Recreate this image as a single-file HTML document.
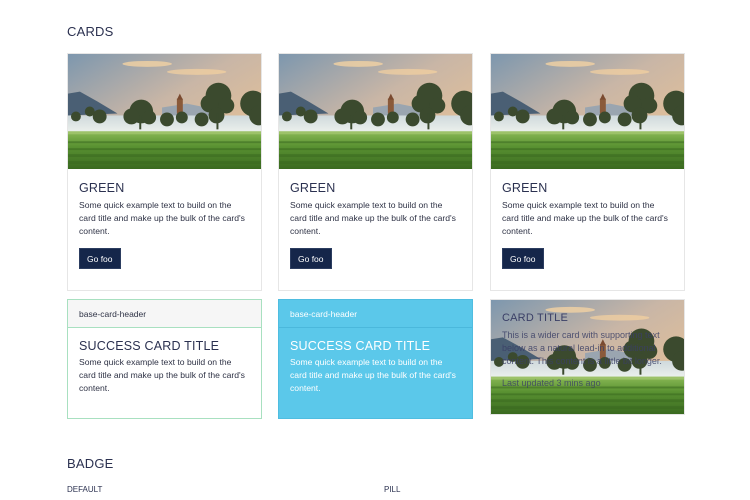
<!DOCTYPE html>
<html><head><meta charset="utf-8">
<style>
*{margin:0;padding:0;box-sizing:border-box}
body{width:750px;height:500px;background:#fff;font-family:"Liberation Sans",sans-serif;position:relative;overflow:hidden;color:#2b3150}
.h{position:absolute;font-size:13px;color:#2b3150;letter-spacing:.2px}
.card{position:absolute;border:1px solid #e6e6e6;background:#fff}
.card svg{display:block}
.body{padding:0 11px}
.t{font-size:12.5px;color:#2b3150;letter-spacing:.2px}
.p{font-size:8.6px;line-height:13px;color:#2f3346}
.btn{display:inline-block;background:#15264a;color:#fff;font-size:8.5px;height:21px;line-height:21px;padding:0 7px;border:1px solid #2c3d60}
.small{position:absolute;font-size:8px;color:#2b3150}
</style></head><body>
<svg width="0" height="0" style="position:absolute">
<defs>
<linearGradient id="sky" x1="0" y1="0" x2="1" y2="1">
<stop offset="0" stop-color="#7d97ae"/><stop offset=".45" stop-color="#c9b6a6"/><stop offset="1" stop-color="#efc592"/>
</linearGradient>
<linearGradient id="fld" x1="0" y1="0" x2="0" y2="1">
<stop offset="0" stop-color="#8ab955"/><stop offset=".4" stop-color="#5a9232"/><stop offset="1" stop-color="#3a6a20"/>
</linearGradient>
<linearGradient id="mist" x1="0" y1="0" x2="0" y2="1">
<stop offset="0" stop-color="#cfd9dc"/><stop offset="1" stop-color="#eef2ee"/>
</linearGradient>
<symbol id="land" viewBox="0 0 195 116" preserveAspectRatio="none">
<rect width="195" height="116" fill="url(#sky)"/>
<ellipse cx="80" cy="10" rx="25" ry="3" fill="#f3d2a2" opacity=".8"/>
<ellipse cx="130" cy="18" rx="30" ry="3" fill="#f5d29f" opacity=".7"/>
<path d="M0 40 L12 38 L30 48 L50 60 L0 62Z" fill="#4a5f74"/>
<path d="M95 54 L120 50 L150 56 L150 62 L95 62Z" fill="#9aa5b0"/>
<rect x="110" y="45" width="6" height="15" fill="#8a5a3a"/>
<path d="M113 40 L110 46 L116 46Z" fill="#7a4a30"/>
<rect x="0" y="62" width="195" height="18" fill="url(#mist)"/>
<g fill="#3b4a2e">
<circle cx="74" cy="58" r="12"/><circle cx="64" cy="63" r="8"/><circle cx="82" cy="64" r="7"/><rect x="72" y="62" width="2" height="14"/>
<circle cx="152" cy="42" r="13"/><circle cx="143" cy="50" r="9"/><circle cx="160" cy="52" r="8"/><circle cx="150" cy="62" r="8"/><rect x="150" y="60" width="2" height="16"/>
<circle cx="187" cy="50" r="13"/><circle cx="193" cy="62" r="10"/>
<circle cx="32" cy="63" r="7"/><circle cx="22" cy="58" r="5"/>
<circle cx="135" cy="66" r="7"/><circle cx="115" cy="64" r="6"/><circle cx="100" cy="66" r="7"/><circle cx="8" cy="63" r="5"/>
</g>
<rect x="0" y="78" width="195" height="38" fill="url(#fld)"/>
<g fill="#3a6a20" opacity=".55"><rect x="0" y="88" width="195" height="2"/><rect x="0" y="95" width="195" height="2"/><rect x="0" y="101" width="195" height="3"/><rect x="0" y="108" width="195" height="3"/></g>
<rect x="0" y="78" width="195" height="3" fill="#a6c874" opacity=".7"/>
</symbol>
</defs></svg>

<div class="h" style="left:67px;top:24px">CARDS</div>

<div class="card" style="left:67px;top:53px;width:195px;height:238px">
<svg width="193" height="115"><use href="#land" width="193" height="115"/></svg>
<div class="body"><div class="t" style="margin-top:12px">GREEN</div>
<div class="p" style="margin-top:4px">Some quick example text to build on the card title and make up the bulk of the card's content.</div>
<div class="btn" style="margin-top:10px">Go foo</div></div></div>

<div class="card" style="left:278px;top:53px;width:195px;height:238px">
<svg width="193" height="115"><use href="#land" width="193" height="115"/></svg>
<div class="body"><div class="t" style="margin-top:12px">GREEN</div>
<div class="p" style="margin-top:4px">Some quick example text to build on the card title and make up the bulk of the card's content.</div>
<div class="btn" style="margin-top:10px">Go foo</div></div></div>

<div class="card" style="left:490px;top:53px;width:195px;height:238px">
<svg width="193" height="115"><use href="#land" width="193" height="115"/></svg>
<div class="body"><div class="t" style="margin-top:12px">GREEN</div>
<div class="p" style="margin-top:4px">Some quick example text to build on the card title and make up the bulk of the card's content.</div>
<div class="btn" style="margin-top:10px">Go foo</div></div></div>

<div class="card" style="left:67px;top:299px;width:195px;height:120px;border-color:#a8e0c0">
<div style="height:28px;background:#f6f6f6;border-bottom:1px solid #a8e0c0;font-size:8.5px;line-height:28px;padding-left:11px;color:#2f3346">base-card-header</div>
<div class="body"><div class="t" style="margin-top:11px">SUCCESS CARD TITLE</div>
<div class="p" style="margin-top:3px">Some quick example text to build on the card title and make up the bulk of the card's content.</div></div></div>

<div class="card" style="left:278px;top:299px;width:195px;height:120px;background:#5bc8ea;border-color:#4fbde0">
<div style="height:28px;border-bottom:1px solid #4bb8dc;font-size:8.5px;line-height:28px;padding-left:11px;color:#fff">base-card-header</div>
<div class="body"><div class="t" style="margin-top:11px;color:#fff">SUCCESS CARD TITLE</div>
<div class="p" style="margin-top:3px;color:#fff">Some quick example text to build on the card title and make up the bulk of the card's content.</div></div></div>

<div class="card" style="left:490px;top:299px;width:195px;height:116px;overflow:hidden">
<svg width="193" height="114" style="position:absolute;left:0;top:0"><use href="#land" width="193" height="114"/></svg>
<div style="position:absolute;left:11px;top:12px;width:168px">
<div class="t" style="color:#3a3f66;font-size:11px">CARD TITLE</div>
<div class="p" style="margin-top:5px;color:#3a3f66;opacity:.85;font-size:9px">This is a wider card with supporting text below as a natural lead-in to additional content. This content is a little bit longer.</div>
<div class="p" style="margin-top:9px;color:#3a3f66;opacity:.8;font-size:9px">Last updated 3 mins ago</div>
</div></div>

<div class="h" style="left:67px;top:456px">BADGE</div>
<div class="small" style="left:67px;top:485px">DEFAULT</div>
<div class="small" style="left:384px;top:485px">PILL</div>
</body></html>
